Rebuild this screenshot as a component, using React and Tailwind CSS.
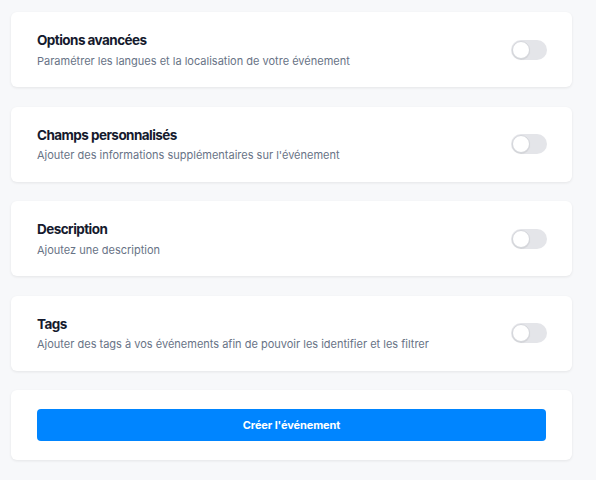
import React from "react";

const items = [
  { title: "Options avancées", desc: "Paramétrer les langues et la localisation de votre événement" },
  { title: "Champs personnalisés", desc: "Ajouter des informations supplémentaires sur l'événement" },
  { title: "Description", desc: "Ajoutez une description" },
  { title: "Tags", desc: "Ajouter des tags à vos événements afin de pouvoir les identifier et les filtrer" },
];

function Toggle() {
  return (
    <div className="w-[36px] h-[20px] rounded-full bg-[#e4e5e9] p-[1px] flex items-center">
      <div className="w-[18px] h-[18px] rounded-full bg-white border border-[#d4d6db] shadow-[0_1px_1px_rgba(0,0,0,0.08)]" />
    </div>
  );
}

export default function App() {
  return (
    <div
      className="w-[596px] h-[480px] bg-[#f7f8fa] pt-[12px] pl-[11px] pr-[24px] flex flex-col gap-[19.5px]"
      style={{ fontFamily: "Inter, 'Noto Sans', sans-serif" }}
    >
      {items.map((it) => (
        <div
          key={it.title}
          className="h-[75px] bg-white rounded-[6px] shadow-[0_1px_3px_rgba(0,0,0,0.08)] flex items-center justify-between pl-[26px] pr-[25px]"
        >
          <div className="flex flex-col pt-[1px]">
            <div className="text-[13.5px] leading-[18px] font-bold tracking-[-0.55px] text-[#151a2d]">{it.title}</div>
            <div className="text-[11px] leading-[16px] mt-[3.5px] text-[#687386]">{it.desc}</div>
          </div>
          <Toggle />
        </div>
      ))}
      <div className="h-[70px] bg-white rounded-[6px] shadow-[0_1px_3px_rgba(0,0,0,0.08)] flex items-center px-[26px]">
        <button className="w-full h-[32px] rounded-[4px] bg-[#0085ff] text-white text-[11px] font-bold tracking-[-0.1px]">
          Créer l'événement
        </button>
      </div>
    </div>
  );
}
